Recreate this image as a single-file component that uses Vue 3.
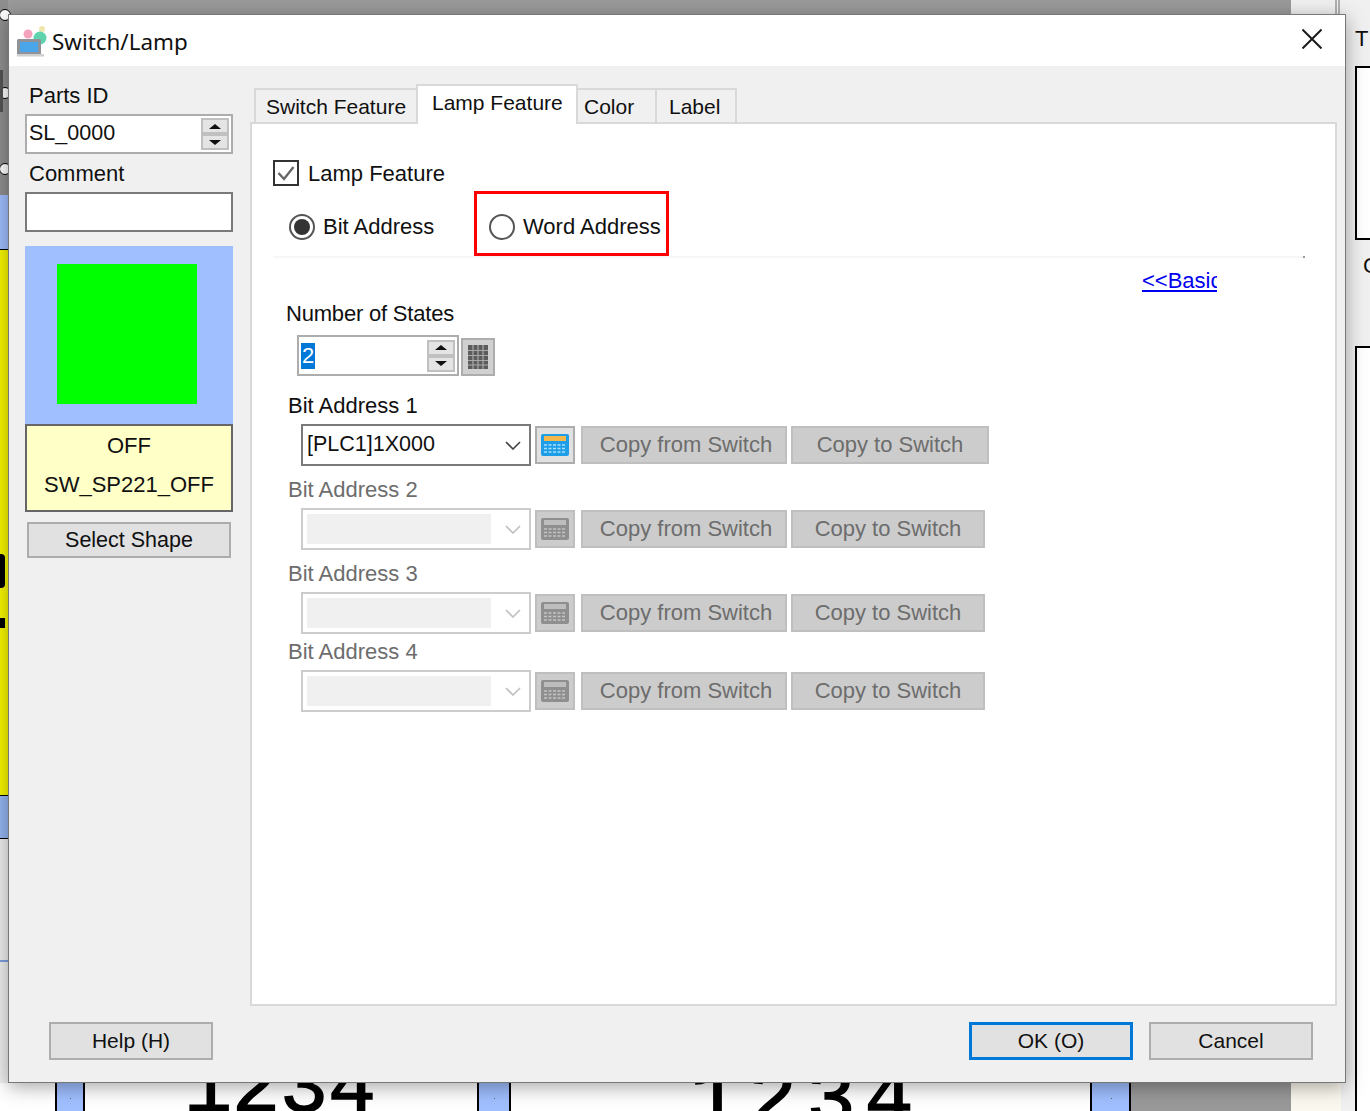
<script setup>
const tabs = [
  { label: 'Switch Feature', cls: 't1' },
  { label: 'Lamp Feature', cls: 't2 active' },
  { label: 'Color', cls: 't3' },
  { label: 'Label', cls: 't4' },
]
const addresses = [
  { label: 'Bit Address 1', value: '[PLC1]1X000', enabled: true, toW: 198 },
  { label: 'Bit Address 2', value: '', enabled: false, toW: 194 },
  { label: 'Bit Address 3', value: '', enabled: false, toW: 194, short: true },
  { label: 'Bit Address 4', value: '', enabled: false, toW: 194 },
]
</script>

<template>
  <div class="desktop">
    <div class="bg-top"></div>
    <div class="bg-top-right"></div>
    <div class="left-strip">
      <i class="s-gray"></i><i class="s-blue1"></i><i class="s-yellow"></i><i class="s-blue2"></i><i class="s-white"></i><i class="s-blue3"></i><i class="s-white2"></i>
    </div>
    <span class="handle h1"></span><span class="handle h2"></span><span class="handle h3"></span>
    <div class="cross"></div>
    <div class="glyph-left"></div><div class="glyph-left2"></div>

    <div class="right-t">T</div>
    <div class="right-c">C</div>
    <div class="right-box b1"></div>
    <div class="right-box b2"></div>

    <div class="bottom-white"></div>
    <div class="bottom-cell c1"></div>
    <div class="bottom-cell c2"></div>
    <div class="bottom-cell c3"></div>
    <div class="bottom-gray"></div>
    <div class="bottom-cream"></div>
    <div class="digits d1">1234</div>
    <div class="digits d2">1234</div>

    <section class="dialog">
      <header class="titlebar">
        <svg class="app-icon" viewBox="0 0 32 32" width="32" height="32">
          <circle cx="12" cy="9" r="4.5" fill="#f4a3bd"/>
          <circle cx="26" cy="4" r="3" fill="#efe6ae"/>
          <circle cx="24" cy="13" r="6.5" fill="#5fd3ac"/>
          <rect x="1" y="14" width="24" height="16" rx="1.5" fill="#8f9298"/>
          <rect x="4" y="17" width="18" height="10" fill="#4aa6e8"/>
          <rect x="1" y="29" width="27" height="2.5" fill="#cfcfcf"/>
        </svg>
        <span class="title">Switch/Lamp</span>
        <svg class="close" viewBox="0 0 20 20" width="20" height="20">
          <path d="M0.5 0.5 L19.5 19.5 M19.5 0.5 L0.5 19.5" stroke="#1a1a1a" stroke-width="2" fill="none"/>
        </svg>
      </header>

      <div class="body">
        <aside class="side">
          <label class="side-label first">Parts ID</label>
          <div class="parts-input">
            <span class="val">SL_0000</span>
            <div class="spin">
              <span class="up"></span><span class="down"></span>
            </div>
          </div>
          <label class="side-label second">Comment</label>
          <div class="comment-input"></div>
          <div class="preview"><div class="green"></div></div>
          <div class="caption">
            <span>OFF</span>
            <span>SW_SP221_OFF</span>
          </div>
          <button class="btn select-shape">Select Shape</button>
        </aside>

        <main class="main">
          <nav class="tabs">
            <div v-for="t in tabs" :key="t.label" class="tab" :class="t.cls">{{ t.label }}</div>
          </nav>
          <div class="panel">
            <div class="check-row">
              <span class="checkbox">
                <svg viewBox="0 0 22 22" width="22" height="22"><path d="M3.5 11 L9 17 L18.5 5" stroke="#666" stroke-width="2.4" fill="none"/></svg>
              </span>
              <span class="text">Lamp Feature</span>
            </div>
            <div class="radio-row">
              <div class="radio-item bit">
                <span class="radio on"><i></i></span>
                <span class="text">Bit Address</span>
              </div>
              <div class="word-box">
                <span class="radio"></span>
                <span class="text">Word Address</span>
              </div>
            </div>
            <div class="divider"><i></i></div>
            <div class="basic-row"><a class="basic">&lt;&lt;Basic</a></div>

            <div class="text states-label">Number of States</div>
            <div class="states-row">
              <div class="states-input">
                <span class="sel">2</span>
                <div class="spin small"><span class="up"></span><span class="down"></span></div>
              </div>
              <div class="grid-btn">
                <svg viewBox="0 0 22 26" width="22" height="26">
                  <rect x="1" y="1" width="20" height="24" fill="#5c5c5c"/>
                  <path d="M1 6.5H21M1 11.5H21M1 16.5H21M1 21H21M6 1V25M11 1V25M16 1V25" stroke="#a9a9a9" stroke-width="1.2"/>
                </svg>
              </div>
            </div>

            <div class="addr-list">
              <div v-for="a in addresses" :key="a.label" class="addr" :class="{ disabled: !a.enabled, short: a.short }">
                <div class="text addr-label">{{ a.label }}</div>
                <div class="addr-row">
                  <div class="combo">
                    <span v-if="a.enabled" class="combo-val">{{ a.value }}</span>
                    <span v-else class="combo-empty"></span>
                    <svg class="chev" viewBox="0 0 16 9" width="16" height="9"><path d="M1 1 L8 8 L15 1" stroke="currentColor" stroke-width="1.6" fill="none"/></svg>
                  </div>
                  <div class="calc">
                    <svg viewBox="0 0 30 24" width="30" height="24">
                      <rect x="1" y="1" width="28" height="22" rx="2" :fill="a.enabled ? '#1f9ee8' : '#8f8f8f'"/>
                      <rect x="4" y="3" width="22" height="5" :fill="a.enabled ? '#f3b84c' : '#bdbdbd'"/>
                      <path d="M4 12H26M4 15.5H26M4 19H26" :stroke="a.enabled ? '#a8e0ff' : '#c4c4c4'" stroke-width="1.5" stroke-dasharray="3 1.5"/>
                    </svg>
                  </div>
                  <div class="copy from">Copy from Switch</div>
                  <div class="copy to" :style="{ width: a.toW + 'px' }">Copy to Switch</div>
                </div>
              </div>
            </div>
          </div>
        </main>
      </div>

      <footer class="footer">
        <button class="btn foot">Help (H)</button>
        <div class="foot-right">
          <button class="btn foot ok">OK (O)</button>
          <button class="btn foot">Cancel</button>
        </div>
      </footer>
    </section>
  </div>
</template>

<style>
html, body { margin: 0; padding: 0; background: #f0f0f0; }
</style>

<style scoped>
.desktop {
  position: relative;
  width: 1370px;
  height: 1111px;
  overflow: hidden;
  background: #f0f0f0;
  font-family: "Liberation Sans", Arial, sans-serif;
  font-size: 22px;
  color: #101010;
}
.bg-top { position: absolute; left: 0; top: 0; width: 1291px; height: 14px; background: #9a9a9a; }
.bg-top-right { position: absolute; left: 1335px; top: 0; width: 5px; height: 14px; border-left: 2px solid #b0b0b0; border-right: 2px solid #b0b0b0; box-sizing: border-box; }
.left-strip { position: absolute; left: 0; top: 0; width: 8px; height: 1083px; display: flex; flex-direction: column; }
.left-strip i { display: block; }
.s-gray { height: 195px; background: #8f8f8f; }
.s-blue1 { height: 55px; background: #a0bfff; border-bottom: 1px solid #000; box-sizing: border-box; }
.s-yellow { height: 545px; background: #f7f700; }
.s-blue2 { height: 44px; background: #95b5f2; border-top: 1px solid #000; border-bottom: 1px solid #000; box-sizing: border-box; }
.s-white { height: 121px; background: #eeeeee; }
.s-blue3 { height: 2px; background: #7f9fe0; }
.s-white2 { flex: 1; background: #eeeeee; }
.handle { position: absolute; left: -1px; width: 10px; height: 10px; border: 1px solid #000; border-radius: 50%; background: #fff; }
.h1 { top: 9px; } .h2 { top: 87px; } .h3 { top: 163px; }
.cross { position: absolute; left: 0; top: 70px; width: 3px; height: 42px; background: #555; }
.glyph-left { position: absolute; left: 0; top: 554px; width: 5px; height: 34px; background: #000; border-radius: 0 4px 4px 0; }
.glyph-left2 { position: absolute; left: 0; top: 618px; width: 5px; height: 10px; background: #000; }
.right-t { position: absolute; left: 1355px; top: 26px; }
.right-c { position: absolute; left: 1363px; top: 253px; }
.right-box { position: absolute; left: 1355px; width: 40px; background: #fff; border: 2px solid #000; }
.b1 { top: 66px; height: 170px; }
.b2 { top: 346px; height: 800px; }
.bottom-white { position: absolute; left: 0; top: 1083px; width: 1131px; height: 28px; background: #fff; }
.bottom-cell { position: absolute; top: 1083px; height: 28px; background: #a0bfff; border-left: 2px solid #000; border-right: 2px solid #000; box-sizing: border-box; }
.bottom-cell::after { content: ""; position: absolute; left: 50%; top: 15px; width: 1px; height: 1px; background: #375; }
.c1 { left: 55px; width: 30px; }
.c2 { left: 477px; width: 34px; }
.c3 { left: 1090px; width: 41px; }
.bottom-gray { position: absolute; left: 1131px; top: 1083px; width: 160px; height: 28px; background: #999; }
.bottom-cream { position: absolute; left: 1291px; top: 1083px; width: 50px; height: 28px; background: #fbf8ef; }
.digits { position: absolute; font-family: "Liberation Mono", monospace; font-weight: 400; -webkit-text-stroke: 1.5px #000; font-size: 80px; line-height: 1; color: #000; }
.d1 { left: 184px; top: 1050px; }
.d2 { left: 690px; top: 1061px; font-size: 82px; letter-spacing: 9px; }

.dialog {
  position: absolute;
  left: 8px;
  top: 14px;
  width: 1338px;
  height: 1069px;
  box-sizing: border-box;
  border: 1px solid #777;
  background: #f0f0f0;
  box-shadow: 0 4px 18px rgba(0, 0, 0, 0.35);
  display: flex;
  flex-direction: column;
}
.titlebar { height: 51px; flex: none; background: #fff; display: flex; align-items: center; position: relative; padding-left: 7px; }
.app-icon { flex: none; }
.title { margin-left: 4px; margin-top: 1px; font-family: "Noto Sans", sans-serif; font-size: 22.4px; }
.close { margin-left: auto; margin-right: 23px; margin-bottom: 4px; }

.body { flex: 1; display: flex; min-height: 0; }
.side { width: 241px; flex: none; padding-left: 16px; box-sizing: border-box; display: flex; flex-direction: column; align-items: flex-start; }
.side-label { line-height: 30px; padding-left: 4px; box-sizing: border-box; }
.first { margin-top: 15px; height: 33px; }
.second { margin-top: 4px; height: 34px; padding-top: 1px; }
.parts-input { width: 208px; height: 40px; box-sizing: border-box; border: 2px solid #adadad; background: #fff; display: flex; align-items: center; padding-left: 2px; }
.val { flex: 1; line-height: 1; font-size: 21.5px; }
.spin { width: 28px; height: 32px; display: flex; flex-direction: column; margin-right: 2px; }
.spin span { flex: 1; display: flex; align-items: center; justify-content: center; border: 2px solid #c0c0c0; background: #e4e4e4; box-sizing: border-box; position: relative; }
.up::after, .down::after { content: ""; width: 0; height: 0; border-left: 6px solid transparent; border-right: 6px solid transparent; }
.up::after { border-bottom: 5px solid #111; }
.down::after { border-top: 5px solid #111; }
.comment-input { width: 208px; height: 40px; box-sizing: border-box; border: 2px solid #7a7a7a; background: #fff; }
.preview { width: 208px; height: 178px; margin-top: 14px; background: #a0bfff; padding: 18px 0 0 32px; box-sizing: border-box; }
.green { width: 140px; height: 140px; background: #00ff00; }
.caption { width: 208px; height: 88px; box-sizing: border-box; border: 2px solid #666; background: #ffffc8; display: flex; flex-direction: column; align-items: center; justify-content: space-around; padding: 0 0 5px; line-height: 1; }
.btn { font: inherit; color: inherit; background: #e1e1e1; border: 2px solid #adadad; padding: 0; box-sizing: border-box; }
.select-shape { width: 204px; height: 36px; margin: 10px 0 0 2px; font-size: 21.5px; }

.main { flex: 1; display: flex; flex-direction: column; min-width: 0; padding-top: 18px; padding-right: 8px; }
.tabs { display: flex; height: 40px; padding-left: 4px; align-items: flex-end; position: relative; z-index: 1; margin-bottom: -2px; font-size: 21px; }
.tab { box-sizing: border-box; height: 34px; background: #f0f0f0; border: 2px solid #d9d9d9; border-bottom: 0; margin-left: -2px; margin-bottom: 2px; display: flex; align-items: center; padding: 2px 0 0 10px; white-space: nowrap; }
.t1 { width: 164px; margin-left: 0; }
.t2 { width: 162px; }
.t3 { width: 81px; padding-left: 6px; }
.t4 { width: 82px; padding-left: 12px; }
.tab.active { height: 40px; background: #fff; margin-bottom: 0; padding: 0 0 4px 14px; z-index: 2; }
.panel { flex: 1; background: #fff; border: 2px solid #d9d9d9; box-sizing: border-box; padding: 36px 0 0 21px; }
.text { line-height: 30px; }
.check-row { display: flex; align-items: center; height: 26px; gap: 9px; }
.check-row .text { margin-top: 2px; }
.checkbox { width: 26px; height: 26px; border: 2px solid #333; box-sizing: border-box; display: flex; align-items: center; justify-content: center; background: #fff; }
.radio-row { display: flex; align-items: center; margin-top: 5px; height: 65px; }
.radio-item { display: flex; align-items: center; gap: 8px; }
.bit { padding: 6px 0 0 16px; width: 201px; box-sizing: border-box; }
.radio { width: 26px; height: 26px; border-radius: 50%; border: 2px solid #555; box-sizing: border-box; display: flex; align-items: center; justify-content: center; background: #fff; flex: none; }
.radio i { width: 16px; height: 16px; border-radius: 50%; background: #333; }
.word-box { width: 195px; height: 65px; border: 3px solid #f00; box-sizing: border-box; display: flex; align-items: center; gap: 8px; padding: 6px 0 0 12px; white-space: nowrap; }
.divider { height: 2px; width: 1032px; background: #f6f6f6; position: relative; }
.divider i { position: absolute; right: 0; top: 0; width: 2px; height: 2px; background: #999; }
.basic-row { height: 46px; padding-left: 869px; display: flex; align-items: center; }
.basic { width: 75px; overflow: hidden; white-space: nowrap; color: #0000ee; text-decoration: underline; }
.states-label { margin-left: 13px; margin-top: -5px; letter-spacing: -0.2px; }
.states-row { display: flex; margin-left: 24px; margin-top: 6px; height: 41px; align-items: flex-end; gap: 2px; }
.states-input { width: 162px; height: 41px; box-sizing: border-box; border: 2px solid #adadad; background: #fff; display: flex; align-items: center; padding-left: 1px; }
.sel { flex: 1; line-height: 26px; background: linear-gradient(#0078d7, #0078d7) no-repeat 1px 0 / 14px 100%; color: #fff; padding-left: 2px; }
.spin.small { margin-right: 2px; }
.grid-btn { width: 34px; height: 38px; box-sizing: border-box; background: #d0d0d0; border: 2px solid #adadad; display: flex; align-items: center; justify-content: center; }
.addr-list { margin-top: 14px; margin-left: 15px; }
.addr { height: 84px; }
.addr.short { height: 78px; }
.addr-label { height: 28px; padding-top: 1px; box-sizing: border-box; }
.addr-row { display: flex; align-items: center; margin-left: 13px; gap: 4px; margin-top: 6px; }
.combo { width: 230px; height: 42px; box-sizing: border-box; border: 2px solid #7a7a7a; background: #fff; display: flex; align-items: center; padding: 0 8px 0 4px; }
.combo-val { flex: 1; line-height: 1; font-size: 21.5px; }
.combo-empty { width: 184px; height: 30px; background: #f0f0f0; }
.chev { margin-left: auto; color: #444; }
.calc { width: 40px; height: 38px; box-sizing: border-box; background: #e1e1e1; border: 2px solid #adadad; display: flex; align-items: center; justify-content: center; }
.copy { height: 38px; box-sizing: border-box; border: 2px solid #bfbfbf; background: #cccccc; color: #6d6d6d; display: flex; align-items: center; justify-content: center; }
.copy.from { width: 206px; margin-left: 2px; padding-left: 4px; }
.disabled .addr-label { color: #6d6d6d; }
.disabled .combo { border-color: #cccccc; }
.disabled .chev { color: #bfbfbf; }
.disabled .calc { background: #cccccc; border-color: #bfbfbf; }

.footer { height: 76px; flex: none; box-sizing: border-box; padding: 16px 32px 0 40px; display: flex; justify-content: space-between; align-items: flex-start; font-size: 21px; }
.foot-right { display: flex; gap: 16px; }
.foot { width: 164px; height: 38px; }
.ok { border: 3px solid #0078d7; }
</style>
